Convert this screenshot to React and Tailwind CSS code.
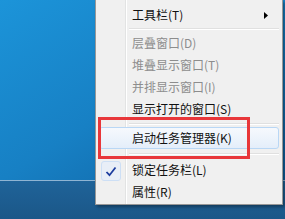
import React from "react";

const font = { fontFamily: '"Noto Sans CJK SC", "Microsoft YaHei", sans-serif' };

function Item({ label, disabled, arrow, checked, hot, h = "h-[22px]" }) {
  return (
    <div
      className={`relative mx-[3px] flex items-center pl-[32px] pr-[10px] text-[12px] ${h} ${
        hot
          ? "rounded-[3px] border border-[#b9d7f5] bg-gradient-to-b from-[#f6f9fd] to-[#e4eefa]"
          : "border border-transparent"
      } ${disabled ? "text-[#8d8d8d]" : "text-[#111]"}`}
    >
      {checked && (
        <div className="absolute left-[1px] top-[1px] flex h-[20px] w-[20px] items-center justify-center rounded-[3px] border border-[#cddff5] bg-[#e8eef7]">
          <svg width="12" height="11" viewBox="0 0 12 11">
            <path d="M1.5 6 L4.5 9.2 L10.5 1.5" fill="none" stroke="#1c3c9e" strokeWidth="1.8" />
          </svg>
        </div>
      )}
      <span className="leading-none">{label}</span>
      {arrow && (
        <svg className="ml-auto" width="4" height="7" viewBox="0 0 4 7">
          <path d="M0 0 L4 3.5 L0 7 Z" fill="#000" />
        </svg>
      )}
    </div>
  );
}

function Sep({ h }) {
  return (
    <div className={`flex items-center pl-[33px] pr-[3px] ${h}`}>
      <div className="h-[2px] w-full border-t border-[#e0e0e0] border-b-white" style={{ borderBottomStyle: "solid", borderBottomWidth: 1 }} />
    </div>
  );
}

export default function App() {
  return (
    <div className="relative h-[219px] w-[285px] overflow-hidden" style={font}>
      {/* 桌面 */}
      <div className="flex h-full flex-col">
        <div className="h-[180px] bg-gradient-to-br from-[#1c94d9] via-[#1780c4] to-[#0f5f9e]" />
        <div className="h-[1px] bg-[#8fb4d3]" />
        <div className="flex-1 bg-gradient-to-b from-[#1f6399] to-[#1b5788]" />
      </div>

      {/* 右键菜单 */}
      <div className="absolute left-[95px] top-0 h-[205px] w-[188px] border-x border-b border-[#979797] bg-[#f0f0f0] pt-[4px] shadow-[2px_2px_3px_rgba(0,0,0,0.35)]">
        <div className="absolute bottom-0 left-[29px] top-0 w-[2px] border-l border-[#e2e3e3] border-r-white" style={{ borderRightStyle: "solid", borderRightWidth: 1 }} />
        <Item label="工具栏(T)" arrow />
        <Sep h="h-[6px]" />
        <Item label="层叠窗口(D)" disabled />
        <Item label="堆叠显示窗口(T)" disabled />
        <Item label="并排显示窗口(I)" disabled />
        <Item label="显示打开的窗口(S)" />
        <Sep h="h-[7px]" />
        <Item label="启动任务管理器(K)" hot />
        <Sep h="h-[10px]" />
        <Item label="锁定任务栏(L)" checked />
        <Item label="属性(R)" />
      </div>

      {/* 红框标注 */}
      <div className="absolute left-[98px] top-[117px] h-[42px] w-[152px] border-[3px] border-[#e8373a]" />
    </div>
  );
}
